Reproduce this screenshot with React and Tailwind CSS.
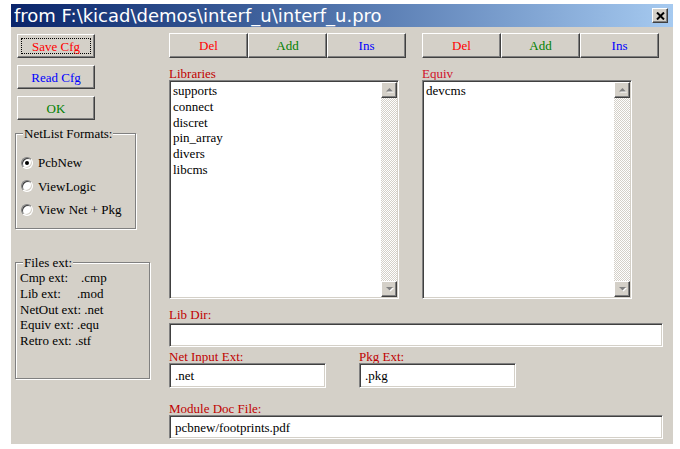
import React from "react";

const raised =
  "bg-[#d4d0c8] border border-t-white border-l-white border-r-[#404040] border-b-[#404040] shadow-[inset_-1px_-1px_0_#808080,inset_1px_1px_0_#d4d0c8]";
const sunken =
  "bg-white border border-t-[#808080] border-l-[#808080] border-r-white border-b-white shadow-[inset_1px_1px_0_#404040,inset_-1px_-1px_0_#d4d0c8] p-[1px]";

function Btn({ children, color, className = "" }) {
  return (
    <div className={`${raised} ${className} flex items-center justify-center text-[13px] leading-none ${color}`}>
      {children}
    </div>
  );
}

function Arrow({ down }) {
  return (
    <svg width="9" height="6" viewBox="0 0 9 6">
      {down ? (
        <>
          <path d="M1 1 H8 L4.5 4.5 Z" fill="#ffffff" transform="translate(1,1)" />
          <path d="M1 1 H8 L4.5 4.5 Z" fill="#808080" />
        </>
      ) : (
        <>
          <path d="M1 4.5 H8 L4.5 1 Z" fill="#ffffff" transform="translate(1,1)" />
          <path d="M1 4.5 H8 L4.5 1 Z" fill="#808080" />
        </>
      )}
    </svg>
  );
}

function Scrollbar() {
  return (
    <div className="w-[16px] flex flex-col">
      <div className={`${raised} h-[16px] flex items-center justify-center`}>
        <Arrow />
      </div>
      <div className="flex-1 bg-[image:repeating-conic-gradient(#ffffff_0_25%,#d4d0c8_0_50%)] bg-[length:2px_2px]" />
      <div className={`${raised} h-[16px] flex items-center justify-center`}>
        <Arrow down />
      </div>
    </div>
  );
}

function ListBox({ items, width }) {
  return (
    <div className={`${sunken} ${width} h-[219px] flex`}>
      <div className="flex-1 pl-[2px] pt-[1px] text-[13px] leading-[15.8px] text-black">
        {items.map((t) => (
          <div key={t}>{t}</div>
        ))}
      </div>
      <Scrollbar />
    </div>
  );
}

function Radio({ checked, label }) {
  return (
    <div className="h-[23.5px] flex items-center gap-[5px]">
      <div className="w-[12px] h-[12px] rounded-full bg-white border border-t-[#808080] border-l-[#808080] border-r-white border-b-white shadow-[inset_1px_1px_0_#404040,inset_-1px_-1px_0_#d4d0c8] flex items-center justify-center">
        {checked && <div className="w-[4px] h-[4px] rounded-full bg-black" />}
      </div>
      <span className="text-[13px] leading-none text-black">{label}</span>
    </div>
  );
}

function Group({ title, className, children }) {
  return (
    <div className={`relative border border-[#808080] shadow-[inset_1px_1px_0_#ffffff,1px_1px_0_#ffffff] ${className}`}>
      <span className="absolute -top-[8px] left-[7px] bg-[#d4d0c8] px-[1px] text-[13px] leading-[15px] text-black">
        {title}
      </span>
      {children}
    </div>
  );
}

function Label({ children, className = "" }) {
  return (
    <div className={`flex items-end text-[13px] leading-[13px] text-[#c00000] ${className}`}>
      {children}
    </div>
  );
}

function Field({ value = "", className = "" }) {
  return (
    <div className={`${sunken} ${className} flex items-center pl-[5px] text-[13px] leading-none text-black`}>
      {value}
    </div>
  );
}

export default function App() {
  return (
    <div className="w-[680px] h-[449px] bg-white pt-[4px] pl-[11px] font-['Liberation_Serif',serif]">
      <div className="w-[662px] h-[440px] bg-[#d4d0c8] flex flex-col">
        <div className="h-[23px] bg-gradient-to-r from-[#0a246a] to-[#a6caf0] flex items-center justify-between pl-[3px] pr-[5px]">
          <span className="text-white text-[18px] leading-none font-['DejaVu_Sans',sans-serif]">
            from F:\kicad\demos\interf_u\interf_u.pro
          </span>
          <div className={`${raised} w-[16px] h-[15px] flex items-center justify-center`}>
            <svg width="9" height="8" viewBox="0 0 9 8">
              <path d="M1 0.5 L8 7.5 M8 0.5 L1 7.5" stroke="#000" strokeWidth="2" />
            </svg>
          </div>
        </div>

        <div className="flex flex-1">
          {/* left column */}
          <div className="w-[158px] pl-[4px] pt-[7px] flex flex-col">
            <div className="ml-[2px] flex flex-col gap-[7px]">
              <div className={`${raised} w-[78px] h-[24px] p-[3px] flex`}>
                <div className="flex-1 border border-dotted border-black flex items-center justify-center text-[13px] leading-none text-[#ff0000]">
                  Save Cfg
                </div>
              </div>
              <Btn color="text-[#0000ff]" className="w-[78px] h-[24px]">Read Cfg</Btn>
              <Btn color="text-[#008000]" className="w-[78px] h-[24px]">OK</Btn>
            </div>
            <Group title="NetList Formats:" className="mt-[13px] w-[121px] h-[96px] pt-[17px] pl-[5px]">
              <Radio checked label="PcbNew" />
              <Radio label="ViewLogic" />
              <Radio label="View Net + Pkg" />
            </Group>
            <Group title="Files ext:" className="mt-[33px] w-[135px] h-[117px] pt-[7px] pl-[4px]">
              <div className="text-[13px] leading-[15.75px] text-black whitespace-pre">
                <div>{"Cmp ext:    .cmp"}</div>
                <div>{"Lib ext:     .mod"}</div>
                <div>{"NetOut ext: .net"}</div>
                <div>{"Equiv ext: .equ"}</div>
                <div>{"Retro ext: .stf"}</div>
              </div>
            </Group>
          </div>

          {/* right area */}
          <div className="flex-1 pt-[6px] flex flex-col">
            <div className="flex gap-[16px]">
              <div className="w-[237px] flex flex-col">
                <div className="flex">
                  <Btn color="text-[#ff0000]" className="w-[79px] h-[25px]">Del</Btn>
                  <Btn color="text-[#008000]" className="w-[79px] h-[25px]">Add</Btn>
                  <Btn color="text-[#0000ff]" className="w-[79px] h-[25px]">Ins</Btn>
                </div>
                <Label className="h-[22px] text-[#b00000]">Libraries</Label>
                <ListBox
                  width="w-[230px]"
                  items={["supports", "connect", "discret", "pin_array", "divers", "libcms"]}
                />
              </div>
              <div className="w-[237px] flex flex-col">
                <div className="flex">
                  <Btn color="text-[#ff0000]" className="w-[79px] h-[25px]">Del</Btn>
                  <Btn color="text-[#008000]" className="w-[79px] h-[25px]">Add</Btn>
                  <Btn color="text-[#0000ff]" className="w-[79px] h-[25px]">Ins</Btn>
                </div>
                <Label className="h-[22px] text-[#d0102a]">Equiv</Label>
                <ListBox width="w-[210px]" items={["devcms"]} />
              </div>
            </div>

            <Label className="h-[24px] pb-[2px]">Lib Dir:</Label>
            <Field className="w-[494px] h-[24px]" />

            <div className="flex gap-[33px]">
              <div className="flex flex-col">
                <Label className="h-[16px]">Net Input Ext:</Label>
                <Field value=".net" className="w-[157px] h-[25px]" />
              </div>
              <div className="flex flex-col">
                <Label className="h-[16px]">Pkg Ext:</Label>
                <Field value=".pkg" className="w-[157px] h-[25px]" />
              </div>
            </div>

            <Label className="h-[27px]">Module Doc File:</Label>
            <Field value="pcbnew/footprints.pdf" className="w-[494px] h-[24px]" />
          </div>
        </div>
      </div>
    </div>
  );
}
